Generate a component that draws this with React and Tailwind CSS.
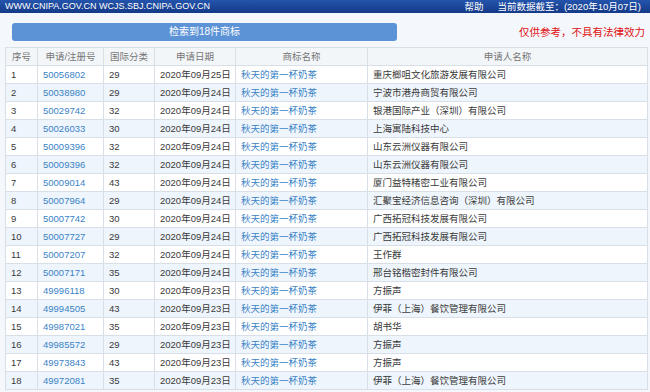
import React from "react";

const rows = [
  ["1","50056802","29","2020年09月25日","重庆榔咀文化旅游发展有限公司"],
  ["2","50038980","29","2020年09月24日","宁波市港舟商贸有限公司"],
  ["3","50029742","32","2020年09月24日","银港国际产业（深圳）有限公司"],
  ["4","50026033","30","2020年09月24日","上海寓陆科技中心"],
  ["5","50009396","32","2020年09月24日","山东云洲仪器有限公司"],
  ["6","50009396","32","2020年09月24日","山东云洲仪器有限公司"],
  ["7","50009014","43","2020年09月24日","厦门益特楮密工业有限公司"],
  ["8","50007964","29","2020年09月24日","汇聚宝经济信息咨询（深圳）有限公司"],
  ["9","50007742","30","2020年09月24日","广西拓冠科技发展有限公司"],
  ["10","50007727","29","2020年09月24日","广西拓冠科技发展有限公司"],
  ["11","50007207","32","2020年09月24日","王作群"],
  ["12","50007171","35","2020年09月24日","邢台铭楷密封件有限公司"],
  ["13","49996118","30","2020年09月23日","方振声"],
  ["14","49994505","43","2020年09月23日","伊菲（上海）餐饮管理有限公司"],
  ["15","49987021","35","2020年09月23日","胡书华"],
  ["16","49985572","29","2020年09月23日","方振声"],
  ["17","49973843","43","2020年09月23日","方振声"],
  ["18","49972081","35","2020年09月23日","伊菲（上海）餐饮管理有限公司"],
];

const font = { fontFamily: '"Liberation Sans","Noto Sans CJK SC",sans-serif' };
const cell = "border border-[#d9dfe6] pl-[5px] p-0 leading-none whitespace-nowrap overflow-hidden";

export default function App() {
  return (
    <div className="w-[650px] h-[392px] overflow-hidden bg-[#f4f8fc] text-[9.5px] text-[#3a3a3a]" style={font}>
      <div className="h-[13px] flex items-center justify-between px-[5px] text-white text-[9px] leading-none bg-gradient-to-b from-[#2454ac] to-[#143a88] whitespace-nowrap">
        <span>WWW.CNIPA.GOV.CN WCJS.SBJ.CNIPA.GOV.CN</span>
        <span className="flex gap-[14px] pr-[4px] text-[9.5px]"><span>帮助</span><span>当前数据截至：(2020年10月07日)</span></span>
      </div>
      <div className="flex items-center justify-between pl-[12px] pr-[5px] h-[34px]">
        <div className="w-[385px] h-[18px] mt-[3px] rounded-[3px] bg-[#5c93d6] text-white flex items-center justify-center text-[10px]">检索到18件商标</div>
        <div className="text-[#e01010] text-[10.5px] mt-[6px]">仅供参考，不具有法律效力</div>
      </div>
      <div className="pl-[5px] pr-[2px]">
        <table className="w-[643px] border-collapse table-fixed bg-white">
          <colgroup>
            <col className="w-[32px]" />
            <col className="w-[66px]" />
            <col className="w-[51px]" />
            <col className="w-[81px]" />
            <col className="w-[132px]" />
            <col />
          </colgroup>
          <thead>
            <tr className="h-[18px] bg-[#f3f6f9] text-[#777]">
              {["序号","申请/注册号","国际分类","申请日期","商标名称","申请人名称"].map((h) => (
                <th key={h} className="font-normal border border-[#d9dfe6] text-center p-0 leading-none whitespace-nowrap">{h}</th>
              ))}
            </tr>
          </thead>
          <tbody>
            {rows.map((r, i) => (
              <tr key={i} className={`h-[18px] ${i % 2 === 1 ? "bg-[#eef5fc]" : "bg-white"}`}>
                <td className={cell}>{r[0]}</td>
                <td className={`${cell} text-[#3a83c6]`}>{r[1]}</td>
                <td className={cell}>{r[2]}</td>
                <td className={cell}>{r[3]}</td>
                <td className={`${cell} text-[#3a83c6]`}>秋天的第一杯奶茶</td>
                <td className={cell}>{r[4]}</td>
              </tr>
            ))}
          </tbody>
        </table>
      </div>
    </div>
  );
}
